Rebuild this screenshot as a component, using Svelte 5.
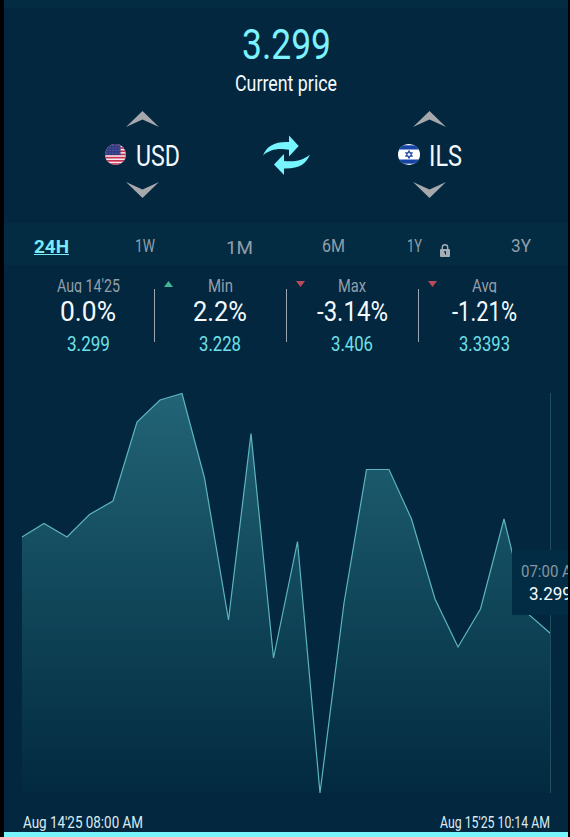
<script>
    const tabs = [
        { name: "24H", width: 35, active: true },
        { name: "1W", width: 20 },
        { name: "1M", width: 27, wide: true },
        { name: "6M", width: 23 },
        { name: "1Y", width: 15, locked: true },
        { name: "3Y", width: 20 },
    ];

    const stats = [
        { title: "Aug 14'25", tw: 63, change: "0.0%", cw: 56, price: "3.299", pw: 43 },
        { title: "Min", tw: 25, change: "2.2%", cw: 54, price: "3.228", pw: 42, trend: "up" },
        { title: "Max", tw: 28, change: "-3.14%", cw: 71, price: "3.406", pw: 42, trend: "down" },
        { title: "Avg", tw: 25, change: "-1.21%", cw: 65, price: "3.3393", pw: 51, trend: "down" },
    ];

    const points = [
        [22, 537], [44, 523.5], [67, 537], [89.5, 514.5], [113, 501],
        [137, 422], [160, 400], [182, 393.5], [204.5, 478], [228.5, 620],
        [251, 433.5], [273.5, 658], [297.5, 541.5], [320, 793], [344, 603],
        [366.5, 469.5], [389, 469.5], [411.5, 519], [435, 599], [458, 647],
        [480.5, 609], [504, 519], [527, 613], [550.5, 633.5],
    ];
    const line = points.map((p) => p.join(",")).join(" ");
    const area = `22,793 ${line} 550.5,793`;
</script>

<!-- Condensed text, squeezed to a fixed width -->
{#snippet label(text, width, size, height)}
    <svg class="label" {width} {height}>
        <text
            x="0"
            y={height / 2 + size * 0.3555}
            font-size={size}
            textLength={width}
            lengthAdjust="spacingAndGlyphs">{text}</text
        >
    </svg>
{/snippet}

{#snippet chevron(down)}
    <svg class="chevron" class:down width="33" height="16" viewBox="0 0 33 16">
        <path d="M16.5 0 33 16 16.5 8.5 0 16Z" fill="#a6a8ab" />
    </svg>
{/snippet}

<div class="screen">
    <div class="topbar"></div>
    <header class="current">
        <div class="price">{@render label("3.299", 89, 43, 46)}</div>
        <div class="caption">{@render label("Current price", 102, 21.5, 32)}</div>
    </header>

    <section class="pair">
        <div class="currency">
            {@render chevron(false)}
            <div class="code">
                <svg width="21" height="21" viewBox="0 0 21 21">
                    <clipPath id="us"><circle cx="10.5" cy="10.5" r="10.5" /></clipPath>
                    <g clip-path="url(#us)">
                        <rect width="21" height="21" fill="#f3eaf1" />
                        {#each [0, 3.2, 6.4, 9.6, 12.8, 16, 19.2] as y}
                            <rect {y} width="21" height="1.7" fill="#c83252" />
                        {/each}
                        <rect width="15.5" height="11" fill="#303b83" />
                        {#each [1.5, 4, 6.5, 9] as y}
                            {#each [2, 5, 8, 11, 14] as x}
                                <circle cx={x} cy={y} r="0.5" fill="#7b83b6" />
                            {/each}
                        {/each}
                    </g>
                </svg>
                {@render label("USD", 44, 29, 32)}
            </div>
            {@render chevron(true)}
        </div>

        <svg class="swap" width="47" height="40" viewBox="0 0 47 40">
            <path d="M0 20.5C4 11 11 6.5 26 7V0.5L35.7 11 26 21.5V14.8C15 13 7 14.5 0 20.5Z" />
            <path d="M47 19.5C43 29 36 34 21 33.5V40L11 29.5 21 19V26C32 27 40 25.5 47 19.5Z" />
        </svg>

        <div class="currency">
            {@render chevron(false)}
            <div class="code israel">
                <svg width="22" height="21" viewBox="0 0 22 21">
                    <clipPath id="il"><ellipse cx="11" cy="10.5" rx="11" ry="10.5" /></clipPath>
                    <g clip-path="url(#il)">
                        <rect width="22" height="21" fill="#fff" />
                        <rect y="1.3" width="22" height="4.2" fill="#1643a5" />
                        <rect y="15.5" width="22" height="4.2" fill="#1643a5" />
                        <path
                            d="M11 6.8 14.2 12.3H7.8ZM11 14.2 7.8 8.7H14.2Z"
                            fill="none"
                            stroke="#2a50a8"
                            stroke-width="1.1"
                        />
                    </g>
                </svg>
                {@render label("ILS", 33, 29, 32)}
            </div>
            {@render chevron(true)}
        </div>
    </section>

    <nav class="tabs">
        {#each tabs as tab}
            <div class="tab" class:active={tab.active} class:wide={tab.wide} class:locked={tab.locked}>
                {@render label(tab.name, tab.width, tab.active ? 19 : 18.5, 20)}
                {#if tab.locked}
                    <svg class="lock" width="10" height="13" viewBox="0 0 10 13">
                        <path d="M2.3 6V3.5a2.7 2.7 0 0 1 5.4 0V6" fill="none" stroke="#a5adb6" stroke-width="1.4" />
                        <rect y="5" width="10" height="8" rx="1" fill="#a5adb6" />
                        <path d="M4 7.3h2v3.2H5V8.5H4Z" fill="#03293f" />
                    </svg>
                {/if}
            </div>
        {/each}
    </nav>

    <section class="stats">
        {#each stats as stat}
            <div class="stat">
                {#if stat.trend}
                    <svg class="trend {stat.trend}" width="9" height="6" viewBox="0 0 9 6">
                        <path d="M4.5 0 9 6H0Z" />
                    </svg>
                {/if}
                <div class="title">{@render label(stat.title, stat.tw, 18, 28)}</div>
                <div class="change">{@render label(stat.change, stat.cw, 27.5, 36)}</div>
                <div class="value">{@render label(stat.price, stat.pw, 19.5, 30)}</div>
            </div>
        {/each}
    </section>

    <section class="chart">
        <svg width="564" height="450" viewBox="4 359 564 450">
            <defs>
                <linearGradient id="fill" gradientUnits="userSpaceOnUse" x1="0" y1="393" x2="0" y2="793">
                    <stop offset="0" stop-color="#226476" />
                    <stop offset="0.5" stop-color="#11475a" />
                    <stop offset="1" stop-color="#02293f" />
                </linearGradient>
            </defs>
            <polygon points={area} fill="url(#fill)" />
            <polyline points={line} fill="none" stroke="#5eb4bf" stroke-width="1.2" />
            <path d="M550.5 393V793" stroke="#21505d" />
        </svg>
        <div class="tooltip">
            <div class="time">{@render label("07:00 AM", 64, 17, 22)}</div>
            <div class="amount">{@render label("3.299", 43, 19, 22)}</div>
        </div>
    </section>

    <footer class="range">
        {@render label("Aug 14'25 08:00 AM", 120, 16.5, 23)}
        {@render label("Aug 15'25 10:14 AM", 110, 16.5, 23)}
    </footer>
</div>

<style>
    :global(body) {
        margin: 0;
        background: #000;
    }

    .screen {
        width: 564px;
        height: 832px;
        margin-left: 4px;
        overflow: hidden;
        background: #02273f;
        border-bottom: 5px solid #77f5ff;
        font-family: Roboto, sans-serif;
        font-weight: 300;
        color: #f4fbff;
    }

    svg {
        display: block;
        flex-shrink: 0;
    }

    .label {
        overflow: visible;
        fill: currentColor;
    }

    .topbar {
        height: 8px;
        background: #032c43;
    }

    /* Current price */
    .current {
        display: flex;
        flex-direction: column;
        align-items: center;
        padding-top: 13px;
        height: 90px;
    }

    .price {
        color: #7cf3ff;
        font-weight: 400;
    }

    .caption {
        font-weight: 400;
    }

    /* Currency selectors */
    .pair {
        display: flex;
        justify-content: center;
        height: 112px;
    }

    .currency {
        width: 240px;
        display: flex;
        flex-direction: column;
        align-items: center;
    }

    .code {
        display: flex;
        align-items: center;
        gap: 10px;
        height: 55px;
        font-weight: 400;
    }

    .israel {
        gap: 9px;
    }

    .code .label {
        margin-top: 2px;
    }

    .down {
        transform: scaleY(-1);
    }

    .swap {
        margin-top: 24px;
        fill: #77f5ff;
    }

    /* Period tabs */
    .tabs {
        display: grid;
        grid-template-columns: repeat(6, 1fr);
        height: 42px;
        background: #032c43;
        color: #929faa;
        font-weight: 400;
    }

    .tab {
        display: flex;
        justify-content: center;
        padding-top: 12px;
    }

    .wide {
        padding-top: 14px;
    }

    .active {
        padding-top: 13px;
        font-weight: 700;
        color: #77ecf8;
    }

    .active .label {
        height: 18px;
        border-bottom: 1px solid #77ecf8;
    }

    .locked {
        justify-content: flex-start;
        gap: 18px;
        padding-left: 27px;
    }

    .lock {
        margin-top: 9px;
    }

    /* Stats */
    .stats {
        display: grid;
        grid-template-columns: repeat(4, 132px);
        justify-content: center;
        height: 94px;
    }

    .stat {
        position: relative;
        display: flex;
        flex-direction: column;
        align-items: center;
    }

    .stat + .stat::before {
        content: "";
        position: absolute;
        left: 0;
        top: 24px;
        width: 1px;
        height: 53px;
        background: #9aa7b1;
    }

    .title {
        height: 28px;
        overflow: hidden;
        color: #929faa;
        padding-top: 7px;
        box-sizing: border-box;
        font-weight: 400;
    }

    .change {
        font-weight: 400;
    }

    .value {
        color: #6fe0e9;
        font-weight: 400;
    }

    .trend {
        position: absolute;
        left: 10px;
        top: 16px;
        fill: #3db893;
    }

    .trend.down {
        fill: #b94b58;
    }

    /* Chart */
    .chart {
        position: relative;
        height: 450px;
    }

    .tooltip {
        position: absolute;
        left: 508px;
        top: 191px;
        width: 56px;
        height: 65px;
        overflow: hidden;
        background: #022c43;
    }

    .time {
        padding: 10px 0 0 9px;
        color: #8796a1;
        font-weight: 400;
    }

    .amount {
        padding-left: 17px;
        font-weight: 400;
    }

    .range {
        display: flex;
        justify-content: space-between;
        padding: 2px 18px 0 19px;
        font-weight: 400;
        color: #dcebf1;
    }
</style>
